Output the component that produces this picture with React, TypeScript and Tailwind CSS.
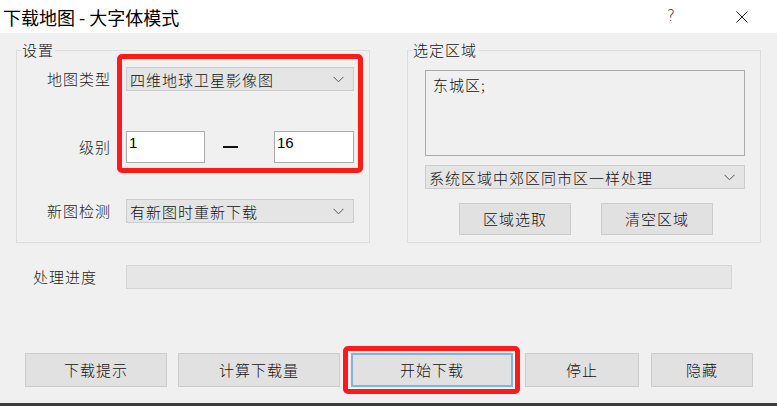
import React from "react";

const F = { fontFamily: '"Noto Sans CJK SC", "Noto Sans", sans-serif' };

function Chevron() {
  return (
    <svg width="11" height="7" viewBox="0 0 11 7" className="shrink-0">
      <path d="M0.5 0.8 L5.5 5.8 L10.5 0.8" fill="none" stroke="#555" strokeWidth="1" />
    </svg>
  );
}

function Combo({ text, w }: { text: string; w: string }) {
  return (
    <div
      className={`${w} h-[24px] bg-[#e5e5e5] border border-[#cccccc] flex items-center justify-between pl-[3px] pr-[9px]`}
    >
      <span className="text-[15px] tracking-[1px] text-[#111] leading-none">{text}</span>
      <Chevron />
    </div>
  );
}

function Btn({ text, w, active }: { text: string; w: string; active?: boolean }) {
  return (
    <div
      className={`${w} h-[34px] flex items-center justify-center text-[15px] tracking-[1px] text-[#111] bg-[#e1e1e1] ${
        active ? "border-2 border-[#7eb4ea]" : "border border-[#cccccc]"
      }`}
    >
      {text}
    </div>
  );
}

export default function App() {
  return (
    <div className="w-[777px] h-[406px] bg-[#f0f0f0] flex flex-col relative overflow-hidden font-light" style={F}>
      {/* title bar */}
      <div className="h-[33px] bg-white flex items-center shrink-0">
        <div className="pl-[3px] text-[18px] text-black leading-none font-normal">下载地图 - 大字体模式</div>
        <div className="ml-auto flex items-center">
          <span className="text-[15px] text-[#222] w-[8px] mr-[61px]" style={{ fontFamily: '"DejaVu Sans", sans-serif' }}>?</span>
          <svg width="12" height="12" viewBox="0 0 12 12" className="mr-[29px]">
            <path d="M0.5 0.5 L11.5 11.5 M11.5 0.5 L0.5 11.5" stroke="#222" strokeWidth="1" />
          </svg>
        </div>
      </div>

      {/* groups */}
      <div className="flex pl-[16px] pt-[17px] gap-[37px] shrink-0">
        {/* group 1 */}
        <div className="relative w-[354px] h-[193px] border border-[#dcdcdc]">
          <span className="absolute left-[4px] top-[-10px] px-[1px] bg-[#f0f0f0] text-[15px] tracking-[1px] leading-[18px] text-[#111]">设置</span>
          <div className="flex flex-col pt-[16px]">
            <div className="flex items-center h-[24px]">
              <span className="w-[94px] text-right text-[15px] tracking-[1px] text-[#222]">地图类型</span>
              <div className="ml-[15px]">
                <Combo text="四维地球卫星影像图" w="w-[228px]" />
              </div>
            </div>
            <div className="flex items-center h-[32px] mt-[40px]">
              <span className="w-[94px] text-right text-[15px] tracking-[1px] text-[#222]">级别</span>
              <div className="ml-[15px] w-[79px] h-[32px] bg-white border border-[#ababab] pl-[2px] pt-[1px] text-[15px] leading-[20px] text-black font-normal" style={{ fontFamily: '"Liberation Sans", sans-serif' }}>1</div>
              <div className="w-[69px] flex justify-start">
                <div className="w-[15px] h-[2px] bg-[#111] ml-[18px]" />
              </div>
              <div className="w-[80px] h-[32px] bg-white border border-[#ababab] pl-[2px] pt-[1px] text-[15px] leading-[20px] text-black font-normal" style={{ fontFamily: '"Liberation Sans", sans-serif' }}>16</div>
            </div>
            <div className="flex items-center h-[24px] mt-[36px]">
              <span className="w-[94px] text-right text-[15px] tracking-[1px] text-[#222]">新图检测</span>
              <div className="ml-[15px]">
                <Combo text="有新图时重新下载" w="w-[228px]" />
              </div>
            </div>
          </div>
        </div>

        {/* group 2 */}
        <div className="relative w-[354px] h-[193px] border border-[#dcdcdc]">
          <span className="absolute left-[4px] top-[-10px] px-[1px] bg-[#f0f0f0] text-[15px] tracking-[1px] leading-[18px] text-[#111]">选定区域</span>
          <div className="flex flex-col pt-[19px] pl-[17px] pr-[15px]">
            <div className="h-[86px] border border-[#ababab] bg-[#f0f0f0] pl-[7px] pt-[3px] text-[15px] tracking-[1px] text-[#111]">东城区;</div>
            <div className="mt-[9px]">
              <Combo text="系统区域中郊区同市区一样处理" w="w-[320px]" />
            </div>
            <div className="flex mt-[14px] pl-[34px] gap-[30px]">
              <div className="w-[112px] h-[32px] bg-[#e1e1e1] border border-[#cccccc] flex items-center justify-center text-[15px] tracking-[1px] text-[#111]">区域选取</div>
              <div className="w-[112px] h-[32px] bg-[#e1e1e1] border border-[#cccccc] flex items-center justify-center text-[15px] tracking-[1px] text-[#111]">清空区域</div>
            </div>
          </div>
        </div>
      </div>

      {/* progress */}
      <div className="flex items-center mt-[22px] h-[24px] shrink-0">
        <span className="pl-[33px] w-[126px] text-[15px] tracking-[1px] text-[#222]">处理进度</span>
        <div className="w-[606px] h-[24px] bg-[#e6e6e6] border border-[#d6d6d6]" />
      </div>

      {/* buttons */}
      <div className="flex mt-[64px] pl-[25px] shrink-0">
        <Btn text="下载提示" w="w-[142px]" />
        <div className="ml-[11px]"><Btn text="计算下载量" w="w-[162px]" /></div>
        <div className="ml-[11px]"><Btn text="开始下载" w="w-[162px]" active /></div>
        <div className="ml-[12px]"><Btn text="停止" w="w-[114px]" /></div>
        <div className="ml-[12px]"><Btn text="隐藏" w="w-[102px]" /></div>
      </div>

      <div className="mt-auto h-[3px] bg-[#3b3b3b] shrink-0" />

      {/* annotation overlays */}
      <div className="absolute left-[117px] top-[54px] w-[246px] h-[119px] border-[5px] border-[#ff1a1a] rounded-[5px] pointer-events-none" />
      <div className="absolute left-[343px] top-[346px] w-[177px] h-[48px] border-[5px] border-[#ff1a1a] rounded-[5px] pointer-events-none" />
    </div>
  );
}
